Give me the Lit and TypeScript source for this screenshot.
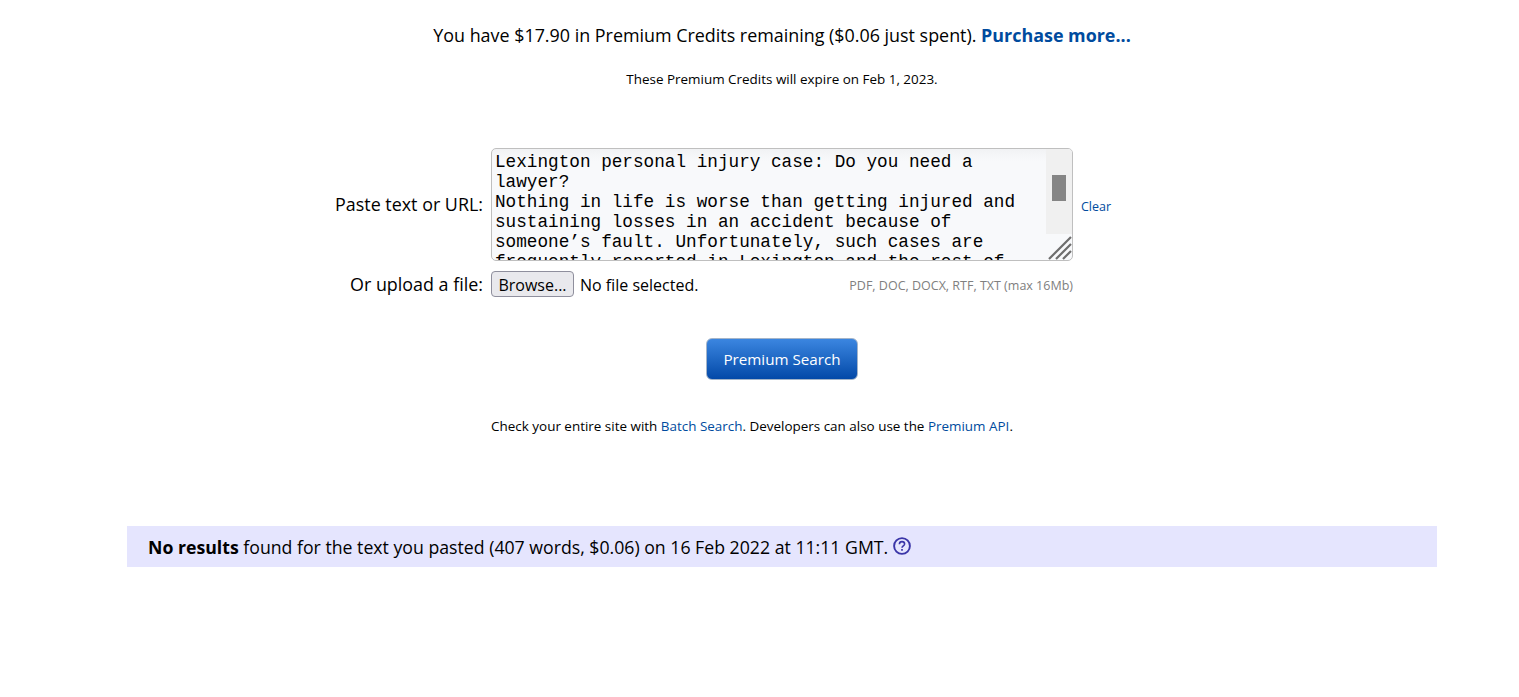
import { css, html, LitElement } from 'lit';
import { customElement } from 'lit/decorators.js';

const PASTED = `Lexington personal injury case: Do you need a lawyer?
Nothing in life is worse than getting injured and sustaining losses in an accident because of someone’s fault. Unfortunately, such cases are frequently reported in Lexington and the rest of Kentucky.`;

@customElement('app-root')
export class AppRoot extends LitElement {
    static styles = css`
        :host {
            display: block;
            height: 697px;
            overflow: hidden;
            background: #fff;
            color: #000;
            font-family: 'Open Sans', 'Noto Sans', sans-serif;
        }
        a {
            color: #004b9e;
            text-decoration: none;
        }
        .page {
            display: flex;
            flex-direction: column;
            align-items: center;
            padding: 0 82px 0 127px;
        }
        .credits {
            margin-top: 23px;
            font-size: 17.9px;
            line-height: 25px;
        }
        .credits a {
            font-weight: 700;
        }
        .expire {
            margin-top: 22px;
            font-size: 13.44px;
            line-height: 18px;
        }
        .form {
            margin-top: 60px;
            display: grid;
            grid-template-columns: 148px 582px 148px;
            column-gap: 8px;
            row-gap: 10px;
            align-items: center;
        }
        .label {
            font-size: 17.9px;
            line-height: 24px;
            text-align: right;
            white-space: nowrap;
            justify-self: end;
        }
        .label.paste {
            margin-bottom: 2px;
        }
        .editor {
            position: relative;
            height: 113px;
        }
        textarea {
            display: block;
            box-sizing: border-box;
            width: 100%;
            height: 113px;
            margin: 0;
            padding: 3px 26px 0 3px;
            border: 1px solid #bfbfbf;
            border-radius: 5px;
            outline: none;
            resize: none;
            overflow: hidden;
            background: linear-gradient(#f1f2f4, #f8f9fb 12px);
            color: #000;
            font-family: 'Liberation Mono', monospace;
            font-size: 17.7px;
            line-height: 20px;
        }
        .track {
            position: absolute;
            top: 1px;
            right: 1px;
            width: 26px;
            height: 85px;
            background: #f0f0f0;
            border-top-right-radius: 4px;
        }
        .thumb {
            position: absolute;
            top: 26px;
            left: 6px;
            width: 14px;
            height: 26px;
            background: #858585;
        }
        .grip {
            position: absolute;
            right: 1px;
            bottom: 1px;
            width: 24px;
            height: 24px;
        }
        .clear {
            margin-top: 4px;
            font-size: 12.5px;
            line-height: 16px;
        }
        .file-row {
            grid-column: 2 / 3;
            display: flex;
            align-items: center;
        }
        .browse {
            box-sizing: border-box;
            height: 26px;
            width: 83px;
            padding: 1px 0 0;
            border: 1px solid #8f8f9d;
            border-radius: 4px;
            background: #e9e9ed;
            color: #000;
            font-family: inherit;
            font-size: 16px;
        }
        .no-file {
            margin: 2px 0 0 6px;
            font-size: 16px;
        }
        .formats {
            margin: 2px 0 0 auto;
            font-size: 12.5px;
            color: #808080;
        }
        .search {
            margin-top: 41px;
            box-sizing: border-box;
            width: 152px;
            height: 42px;
            border: 1px solid #a3b4c9;
            border-radius: 6px;
            background: linear-gradient(#3b86e0, #0349a8);
            color: #fff;
            font-family: inherit;
            font-size: 15.2px;
            padding: 0;
        }
        .more {
            margin: 37px 60px 0 0;
            font-size: 13.44px;
            line-height: 18px;
        }
        .results {
            box-sizing: border-box;
            align-self: stretch;
            margin-top: 91px;
            height: 41px;
            padding-left: 21px;
            display: flex;
            align-items: center;
            gap: 5px;
            background: #e5e5fe;
            font-size: 17.7px;
        }
        .results svg {
            display: block;
            margin-top: -2px;
        }
    `;

    render() {
        return html`
            <div class="page">
                <div class="credits">
                    You have $17.90 in Premium Credits remaining ($0.06 just spent).
                    <a href="#">Purchase more...</a>
                </div>
                <div class="expire">These Premium Credits will expire on Feb 1, 2023.</div>

                <div class="form">
                    <div class="label paste">Paste text or URL:</div>
                    <div class="editor">
                        <textarea .value="${PASTED}" spellcheck="false"></textarea>
                        <div class="track"><div class="thumb"></div></div>
                        <svg class="grip" viewBox="0 0 24 24" fill="none" stroke="#6e6e6e" stroke-width="2.2">
                            <path d="M1 23 23 1M8 23 23 8M15 23 23 15" />
                        </svg>
                    </div>
                    <a class="clear" href="#">Clear</a>
                    <div class="label">Or upload a file:</div>
                    <div class="file-row">
                        <button class="browse">Browse...</button>
                        <span class="no-file">No file selected.</span>
                        <span class="formats">PDF, DOC, DOCX, RTF, TXT (max 16Mb)</span>
                    </div>
                </div>

                <button class="search">Premium Search</button>

                <div class="more">
                    Check your entire site with <a href="#">Batch Search</a>. Developers can also use the
                    <a href="#">Premium API</a>.
                </div>

                <div class="results">
                    <span><b>No results</b> found for the text you pasted (407 words, $0.06) on 16 Feb 2022 at 11:11 GMT.</span>
                    <svg width="18" height="18" viewBox="0 0 18 18" fill="none" stroke="#3a35a8">
                        <circle cx="9" cy="9" r="7.9" stroke-width="1.9" />
                        <path d="M6.4 7.2C6.4 5.5 7.6 4.6 9 4.6s2.6.9 2.6 2.3c0 2-2.6 2-2.6 3.9" stroke-width="1.6" />
                        <path d="M9 12.1v1.7" stroke-width="1.7" />
                    </svg>
                </div>
            </div>
        `;
    }
}

declare global {
    interface HTMLElementTagNameMap {
        'app-root': AppRoot;
    }
}
